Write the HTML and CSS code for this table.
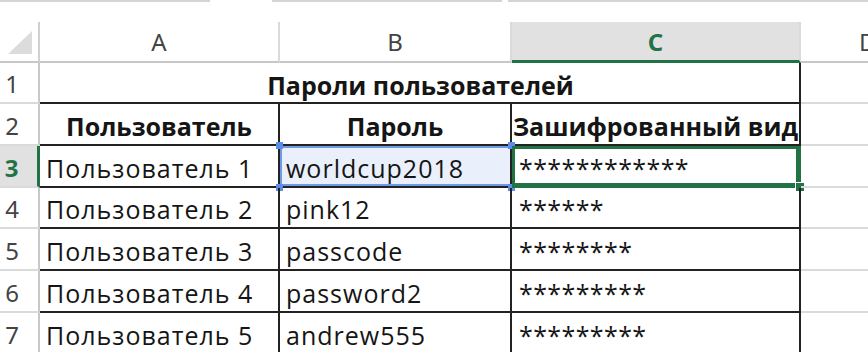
FILE: index.html
```html
<!DOCTYPE html>
<html lang="ru">
<head>
    <meta charset="UTF-8">
    <meta name="viewport" content="width=device-width, initial-scale=1.0">
    <title>Пароли пользователей</title>
    <link rel="stylesheet" href="styles.css">
</head>
<body>
    <div class="topbar">
        <span class="seg seg1"></span>
        <span class="seg seg2"></span>
        <span class="seg seg3"></span>
    </div>
    <div class="sheet">
        <!-- column headers -->
        <div class="corner"><span class="tri"></span></div>
        <div class="colhead">A</div>
        <div class="colhead">B</div>
        <div class="colhead active">C</div>
        <div class="colhead last">D</div>

        <!-- row 1 -->
        <div class="rowhead">1</div>
        <div class="cell title">Пароли пользователей</div>
        <div class="cell empty"></div>

        <!-- row 2 -->
        <div class="rowhead">2</div>
        <div class="cell head">Пользователь</div>
        <div class="cell head">Пароль</div>
        <div class="cell head">Зашифрованный вид</div>
        <div class="cell empty"></div>

        <!-- row 3 -->
        <div class="rowhead active">3</div>
        <div class="cell">Пользователь 1</div>
        <div class="cell ref">worldcup2018
            <span class="handle tl"></span><span class="handle tr"></span>
            <span class="handle bl"></span><span class="handle br"></span>
        </div>
        <div class="cell stars current">************<span class="fill-handle"></span></div>
        <div class="cell empty"></div>

        <!-- row 4 -->
        <div class="rowhead">4</div>
        <div class="cell">Пользователь 2</div>
        <div class="cell">pink12</div>
        <div class="cell stars">******</div>
        <div class="cell empty"></div>

        <!-- row 5 -->
        <div class="rowhead">5</div>
        <div class="cell">Пользователь 3</div>
        <div class="cell">passcode</div>
        <div class="cell stars">********</div>
        <div class="cell empty"></div>

        <!-- row 6 -->
        <div class="rowhead">6</div>
        <div class="cell">Пользователь 4</div>
        <div class="cell">password2</div>
        <div class="cell stars">*********</div>
        <div class="cell empty"></div>

        <!-- row 7 -->
        <div class="rowhead">7</div>
        <div class="cell">Пользователь 5</div>
        <div class="cell">andrew555</div>
        <div class="cell stars">*********</div>
        <div class="cell empty"></div>
    </div>
</body>
</html>
```

FILE: styles.css
```css
body {
    margin: 0;
    background: #ffffff;
    overflow: hidden;
}
.topbar {
    height: 22px;
    display: flex;
    align-items: flex-start;
}
.seg {
    height: 2px;
    background: #d4d4d4;
}
.seg1 {
    width: 210px;
}
.seg2 {
    width: 230px;
    margin-left: 62px;
}
.seg3 {
    flex: 1;
    margin-left: 6px;
}
.sheet {
    display: grid;
    grid-template-columns: 40px 240px 232px 289px 1fr;
    grid-template-rows: 41px 41px 42px 42px 41px 42px 42px 42px;
}
.corner {
    position: relative;
    border-right: 2px solid #d0d0d0;
    border-bottom: 2px solid #c8c8c8;
}
.tri {
    position: absolute;
    right: 6px;
    bottom: 7px;
    width: 0;
    height: 0;
    border-left: 24px solid transparent;
    border-bottom: 23px solid #dcdcdc;
}
.colhead {
    display: flex;
    justify-content: center;
    align-items: center;
    font: 24px "Noto Sans", "DejaVu Sans", sans-serif;
    color: #444444;
    border-right: 2px solid #dadada;
    border-bottom: 2px solid #c8c8c8;
}
.colhead.active {
    background: #e1e1e1;
    color: #217346;
    font-weight: bold;
    border-bottom: 3px solid #217346;
}
.colhead.last {
    justify-content: flex-start;
    padding-left: 58px;
    border-right: none;
}
.rowhead {
    display: flex;
    align-items: center;
    justify-content: center;
    padding-right: 14px;
    padding-top: 2px;
    font: 24px "Noto Sans", "DejaVu Sans", sans-serif;
    color: #444444;
    border-right: 2px solid #c8c8c8;
    border-bottom: 2px solid #dadada;
}
.rowhead.active {
    background: #e1e1e1;
    color: #217346;
    font-weight: bold;
    border-right: 3px solid #217346;
}
.cell {
    position: relative;
    display: flex;
    align-items: flex-end;
    padding: 0 4px 5px 6px;
    font: 25px "Open Sans", "Liberation Sans", sans-serif;
    line-height: 25px;
    letter-spacing: 1px;
    color: #151515;
    white-space: nowrap;
    border-right: 2px solid #222222;
    border-bottom: 2px solid #222222;
}
.title {
    grid-column: span 3;
    justify-content: center;
    font-weight: bold;
    letter-spacing: 0;
    padding-bottom: 4px;
}
.head {
    justify-content: center;
    font-weight: bold;
    letter-spacing: 0;
    padding: 0 0 5px;
}
.empty {
    border-right: none;
    border-bottom: 2px solid #dadada;
}
.stars {
    letter-spacing: 0.4px;
    padding-left: 7px;
}
/* copy-reference highlight on B3 */
.ref {
    background: #eaf0fb;
    box-shadow: inset 0 2px 0 #6f9be6, inset 0 -2px 0 #6f9be6, inset 2px 0 0 #6f9be6;
}
.handle {
    position: absolute;
    width: 7px;
    height: 7px;
    background: #5b8de6;
}
.handle.tl { left: -4px; top: -4px; }
.handle.tr { right: -5px; top: -4px; }
.handle.bl { left: -4px; bottom: -5px; }
.handle.br { right: -5px; bottom: -5px; }
/* active cell C3 */
.current {
    box-shadow: inset 0 0 0 3px #217346;
    border-right-color: #217346;
    border-bottom-color: #217346;
}
.fill-handle {
    position: absolute;
    right: -6px;
    bottom: -6px;
    width: 8px;
    height: 8px;
    background: #217346;
    border: 1px solid #ffffff;
}
```
